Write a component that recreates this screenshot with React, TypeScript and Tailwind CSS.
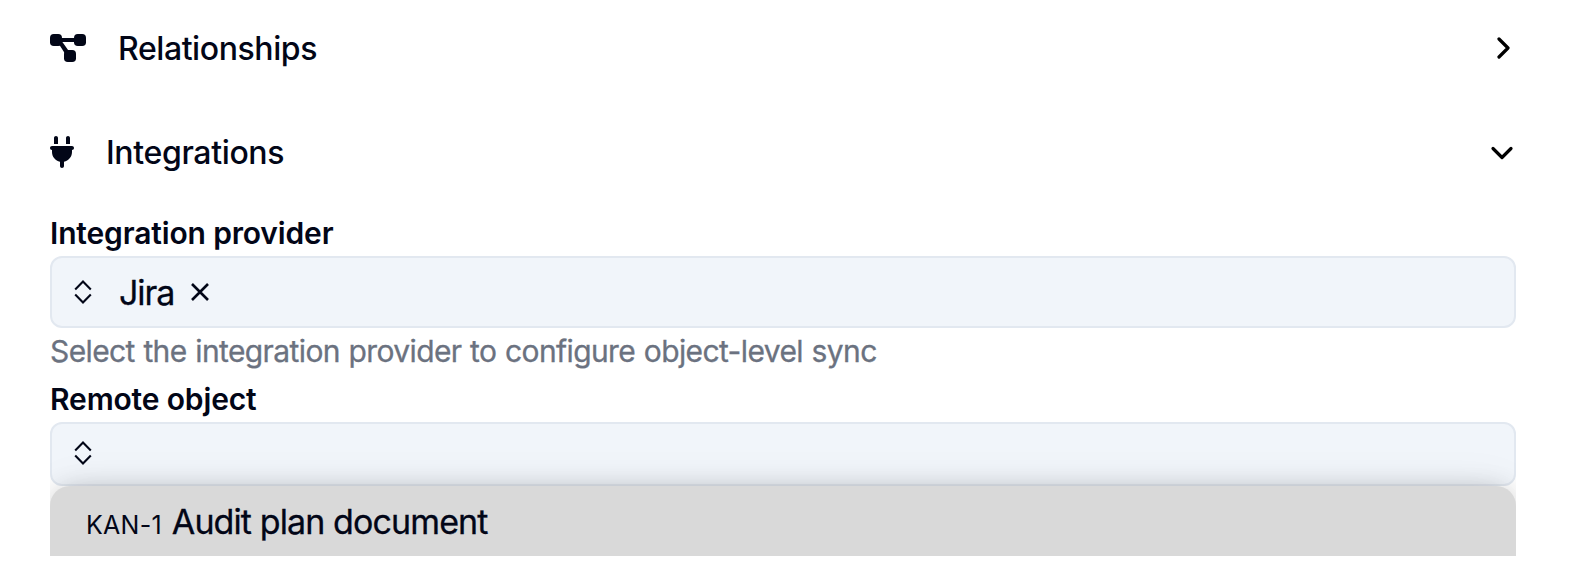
import React from "react";
import { FaPlug } from "react-icons/fa6";

function ProjectIcon() {
  return (
    <svg className="mb-[2px] h-[28px] w-[36px] shrink-0" viewBox="0 0 36 28" fill="currentColor">
      <rect width="12" height="12" rx="3.8" />
      <rect x="24" width="12" height="12" rx="3.8" />
      <rect x="14" y="16" width="12" height="12" rx="3.8" />
      <path d="M10 4h16v4H10zM8.5 9.5 12.4 8l6 8.5-3.8 2.4z" />
    </svg>
  );
}

function Updown() {
  return (
    <svg className="h-[24px] w-[18px] shrink-0" viewBox="0 0 18 24" fill="none" stroke="#020617" strokeWidth="2.1">
      <path d="M1.2 9.4 9 1.6l7.8 7.8M1.2 14.6 9 22.4l7.8-7.8" />
    </svg>
  );
}

export default function App() {
  return (
    <main className="h-[566px] w-[1570px] overflow-hidden bg-white px-[50px] font-['Inter',sans-serif] text-[#020617]">
      <button className="flex h-[97px] w-full items-center text-left">
        <ProjectIcon />
        <span className="ml-8 grow text-[32px] font-medium leading-none tracking-[-0.42px]">Relationships</span>
        <svg className="mr-[9.5px] mb-[1px] h-[24px] w-[14px]" viewBox="0 0 14 24" fill="none" stroke="#000" strokeWidth="3.2" strokeLinecap="round" strokeLinejoin="round"><path d="m2 3 9 9-9 9" /></svg>
      </button>
      <button className="mt-[7px] flex h-[97px] w-full items-center text-left">
        <FaPlug className="mb-[2px] h-[32px] w-[24px] shrink-0" />
        <span className="ml-8 grow text-[32px] font-medium leading-none tracking-[-0.35px]">Integrations</span>
        <svg className="mr-[6px] h-[14px] w-[24px]" viewBox="0 0 24 14" fill="none" stroke="#000" strokeWidth="3.2" strokeLinecap="round" strokeLinejoin="round"><path d="m3 2.5 9 9 9-9" /></svg>
      </button>
      <label className="mt-[12px] block h-[43px] text-[30px] font-semibold leading-[41px] tracking-[-0.15px]">Integration provider</label>
      <div className="flex h-[72px] w-[1466px] items-center rounded-xl border-2 border-[#e2e8f0] bg-[#f1f5fa] pl-[22px]">
        <Updown />
        <span className="ml-[27px] text-[34px] tracking-[-1.1px] [-webkit-text-stroke:0.3px]">Jira</span>
        <svg className="ml-[17px] h-[18px] w-[18px]" viewBox="0 0 18 18" stroke="currentColor" strokeWidth="2.6"><path d="m1 1 16 16M17 1 1 17" /></svg>
      </div>
      <p className="h-[48px] text-[30px] leading-[47px] tracking-[-0.61px] [word-spacing:0.8px] text-[#6b7280] [-webkit-text-stroke:0.3px]">Select the integration provider to configure object-level sync</p>
      <label className="block h-[46px] text-[30px] font-semibold leading-[46px] tracking-[-0.15px]">Remote object</label>
      <div className="w-[1466px] overflow-hidden">
        <div className="flex h-[64px] items-center rounded-xl border-2 border-[#e2e8f0] bg-[#f1f5fa] pb-[2px] pl-[22px]">
          <Updown />
        </div>
        <div className="relative flex h-[70px] items-baseline rounded-t-[20px] bg-[#d9d9d9] pl-[36px] leading-[72px] shadow-[0_0_50px_-4px_rgba(0,0,0,0.07),0_0_28px_-7px_rgba(0,0,0,0.28)]">
          <span className="text-[25px] tracking-[0.25px]">KAN-1</span><span className="ml-[10px] text-[34px] tracking-[-0.89px] [-webkit-text-stroke:0.3px]">Audit plan document</span>
        </div>
      </div>
    </main>
  );
}
